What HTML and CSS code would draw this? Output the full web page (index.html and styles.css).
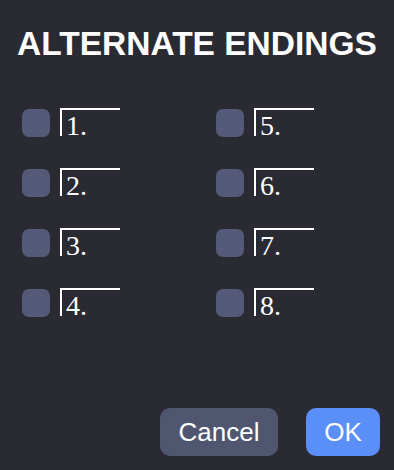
FILE: index.html
```html
<!DOCTYPE html>
<html lang="en">
<head>
    <meta charset="UTF-8">
    <meta name="viewport" content="width=device-width, initial-scale=1.0">
    <title>Alternate Endings</title>
    <link rel="stylesheet" href="styles.css">
</head>
<body>

<div class="dialog">
    <h2 class="title">ALTERNATE ENDINGS</h2>

    <div class="endings">
        <label class="ending"><span class="box"></span><input type="text" class="ending-input" value="1."></label>
        <label class="ending"><span class="box"></span><input type="text" class="ending-input" value="5."></label>
        <label class="ending"><span class="box"></span><input type="text" class="ending-input" value="2."></label>
        <label class="ending"><span class="box"></span><input type="text" class="ending-input" value="6."></label>
        <label class="ending"><span class="box"></span><input type="text" class="ending-input" value="3."></label>
        <label class="ending"><span class="box"></span><input type="text" class="ending-input" value="7."></label>
        <label class="ending"><span class="box"></span><input type="text" class="ending-input" value="4."></label>
        <label class="ending"><span class="box"></span><input type="text" class="ending-input" value="8."></label>
    </div>

    <div class="buttons">
        <button type="button" class="btn btn-cancel">Cancel</button>
        <button type="button" class="btn btn-ok">OK</button>
    </div>
</div>

</body>
</html>
```

FILE: styles.css
```css
html, body {
    margin: 0;
    height: 100%;
    background-color: #2a2a33;
}
.dialog {
    height: 470px;
    box-sizing: border-box;
    padding-top: 24px;
    padding-bottom: 14px;
    display: flex;
    flex-direction: column;
    font-family: "Liberation Sans", Arial, sans-serif;
}
.title {
    margin: 0;
    text-align: center;
    color: #ffffff;
    font-size: 33.5px;
    line-height: 40px;
    font-weight: bold;
}
.endings {
    margin-top: 45px;
    padding-left: 22px;
    display: grid;
    grid-template-columns: 194px 194px;
    row-gap: 32px;
}
.ending {
    display: flex;
    align-items: flex-start;
    gap: 10px;
    height: 28px;
}
.box {
    width: 28px;
    height: 28px;
    border-radius: 7px;
    background-color: #545a78;
}
.ending-input {
    width: 60px;
    height: 28px;
    margin: -1px 0 0 0;
    box-sizing: border-box;
    padding: 5px 0 0 4px;
    border: none;
    border-top: 2px solid #ffffff;
    border-left: 2px solid #ffffff;
    background: transparent;
    color: #ffffff;
    font-family: "Liberation Serif", "Times New Roman", serif;
    font-size: 28px;
    outline: none;
}
.buttons {
    margin-top: auto;
    padding-right: 14px;
    display: flex;
    justify-content: flex-end;
    gap: 28px;
}
.btn {
    height: 48px;
    border: none;
    border-radius: 10px;
    color: #ffffff;
    font-family: "Liberation Sans", Arial, sans-serif;
    font-size: 26px;
    cursor: pointer;
}
.btn-cancel {
    width: 118px;
    background-color: #50566f;
}
.btn-ok {
    width: 74px;
    background-color: #5a8ff7;
}
```
